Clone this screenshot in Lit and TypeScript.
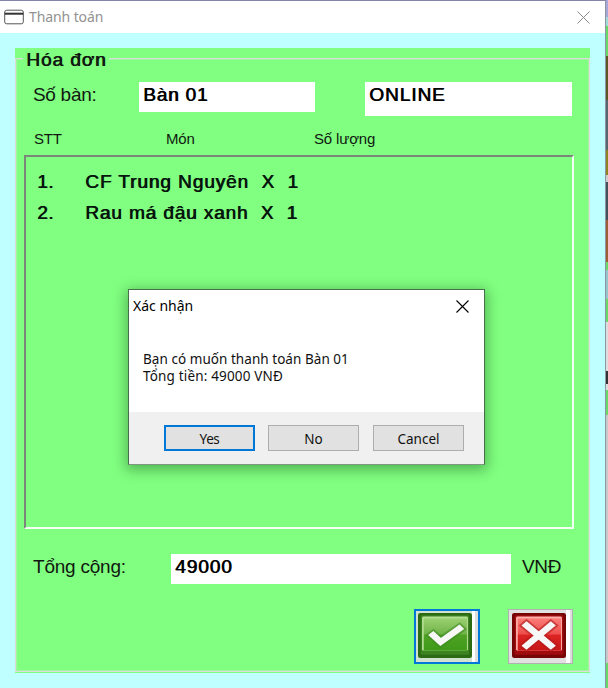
import { LitElement, html, css } from "lit";
import { customElement, property } from "lit/decorators.js";

const MARKS: Record<string, string> = {
  check: "M4.5 7.9 L6.7 10.3 L12.2 5.6",
  cross: "M4.3 4.4 L11.5 11.6 M11.5 4.4 L4.3 11.6",
};

@customElement("pixel-icon")
export class PixelIcon extends LitElement {
  @property() kind = "check";
  static styles = css`
    :host { display: block; width: 54px; height: 45px; }
    svg { display: block; width: 54px; height: 45px; }
  `;
  render() {
    const c = this.kind === "check"
      ? { dark: "#2c6a14", side: "#3d8420", hi: "#b5df95", a: "#9bd072", b: "#71b449", c: "#4fa224", d: "#3f9a18", dot: "#3f8a24" }
      : { dark: "#780506", side: "#a00c0e", hi: "#ffb0ac", a: "#fb7d79", b: "#ee4f4d", c: "#dc2424", d: "#c81616", dot: "#b01a1a" };
    const mark = MARKS[this.kind];
    return html`<svg viewBox="0 0 16 16" preserveAspectRatio="none">
      <defs><linearGradient id="g" x1="0" y1="0" x2="0" y2="1">
        <stop offset="0" stop-color=${c.a}></stop><stop offset=".48" stop-color=${c.b}></stop>
        <stop offset=".52" stop-color=${c.c}></stop><stop offset="1" stop-color=${c.d}></stop>
      </linearGradient></defs>
      <rect x="0" y="0" width="16" height="16" rx=".7" fill=${c.dark}></rect>
      <rect x=".8" y=".8" width="14.4" height="14" rx=".5" fill=${c.side}></rect>
      <rect x="1.2" y="1.2" width="13.6" height="12.2" rx=".5" fill=${c.hi}></rect>
      <rect x="1.7" y="1.9" width="12.8" height="11.5" fill="url(#g)"></rect>
      <path d=${mark} fill="none" stroke=${c.dot} stroke-width="3.3" stroke-linecap="square" stroke-dasharray=".9 .5" opacity=".6"></path>
      <path d=${mark} fill="none" stroke="#f7f7f7" stroke-width="2.1" stroke-linecap="square"></path>
    </svg>`;
  }
}

@customElement("app-root")
export class AppRoot extends LitElement {
  static styles = css`
    :host { display: block; width: 608px; height: 688px; overflow: hidden; position: relative; font-family: "Liberation Sans", Arial, sans-serif; color: #101810; }
    * { box-sizing: border-box; }
    .screen { display: flex; height: 688px; }
    .window { width: 606px; height: 688px; border-top: 1px solid #8483a8; border-right: 1px solid #8f94a4; background: #c0ffff; }
    .backdrop { width: 2px; background: linear-gradient(#a6a8dc 0 17px, #a0dcd8 17px 26px, #68d868 26px 56px, #5c5626 56px 100px, #56666c 100px 150px, #8d8420 150px 175px, #ccc 175px 182px, #435058 182px 220px, #9c5e36 220px 262px, #68d868 262px 270px, #94c5cc 270px 299px, #68d868 299px 322px, #ddd 322px 371px, #333 371px 384px, #ddd 384px 390px, #68d868 390px 415px, #c8c8c8 415px 663px, #68d868 663px); }
    .title { display: flex; align-items: center; height: 32px; padding: 0 15px 0 4px; background: #fff; color: #929292; font: 14px "Noto Sans", sans-serif; }
    .title svg { width: 20px; height: 16px; margin-right: 5px; }
    .title .close { width: 13px; height: 13px; margin: 0 0 0 auto; }
    .t0 { padding-bottom: 2px; letter-spacing: -.1px; }
    .body { padding: 15px; }
    .group { width: 575px; height: 625px; padding: 10px 0 1px; background: #80ff80; }
    .frame { display: flex; flex-direction: column; height: 614px; border: 1px solid #dcdcdc; box-shadow: inset 0 0 0 1px rgba(220, 232, 220, .35); }
    .legend, .field, .list { font-weight: normal; letter-spacing: .95px; text-shadow: .8px 0 0 currentColor; }
    .legend { align-self: flex-start; height: 22px; margin: -11px 0 0 7px; padding: 0 3px; background: #80ff80; font-size: 19px; line-height: 24px; }
    .row { display: flex; align-items: flex-start; font-size: 19px; }
    .field { height: 30px; padding: 0 4px; background: #fff; line-height: 25px; color: #000; }
    .f1 { letter-spacing: .8px; }
    .r1 { margin: 12px 0 0 17px; line-height: 25px; height: 34px; }
    .lab { width: 106px; letter-spacing: -.3px; }
    .f1 { width: 176px; margin-right: 50px; }
    .f2 { width: 207px; height: 34px; }
    .heads { display: flex; margin: 13px 0 0 18px; height: 27px; font-size: 15px; line-height: 20px; letter-spacing: -.15px; }
    .h1 { width: 132px; } .h2 { width: 148px; }
    .list { width: 550px; height: 374px; margin: -1px 0 0 8px; padding: 10px 0 0 11px; border: 2px solid; border-color: #7c877c #f2fff2 #f2fff2 #7c877c; font-size: 19px; color: #06140c; }
    .item { display: flex; height: 31px; line-height: 30px; white-space: pre; }
    .n { width: 48px; letter-spacing: .4px; }
    .i1 { letter-spacing: .92px; } .i2 { letter-spacing: .88px; }
    .total { margin: 25px 0 0 17px; line-height: 25px; height: 30px; }
    .tl { width: 138px; letter-spacing: -.22px; }
    .f3 { width: 340px; margin-right: 11px; }
    .unit { letter-spacing: -.3px; }
    .actions { display: flex; justify-content: space-between; width: 159px; margin: 25px 0 0 398px; }
    .act { width: 66px; height: 55px; padding: 2px 0 0 2px; border: 2px solid #0078d7; background: linear-gradient(90deg, #d2e2d0 56px, #fff 56px 59px, #ddd 59px); }
    .act.no { width: 65px; border: 1px solid #b0b0b0; padding: 3px 0 0 3px; background: linear-gradient(90deg, #e1e1e1 57px, #fff 57px 61px, #ddd 61px); }
    .dialog { position: absolute; left: 128px; top: 289px; width: 357px; height: 176px; border: 1px solid #44704a; border-bottom-color: #7d9a80; background: #fff; color: #000; box-shadow: 0 3px 12px 2px rgba(0, 40, 0, .35); font-family: "Noto Sans", sans-serif; }
    .dt { display: flex; align-items: center; height: 32px; padding: 0 15px 0 4px; font-size: 14px; }
    .dt span { padding-bottom: 2px; }
    .dt svg { width: 13px; height: 13px; margin-left: auto; }
    .msg { display: grid; grid-template-rows: 17px 17px; height: 90px; padding: 29px 0 0 14px; font-size: 13.5px; line-height: 17px; color: #111; }
    .m1 { letter-spacing: .05px; } .m2 { letter-spacing: .17px; }
    .foot { display: flex; justify-content: flex-end; gap: 14px; height: 52px; padding: 13px 20px 0 0; background: #f0f0f0; }
    .btn { width: 91px; height: 26px; border: 1px solid #adadad; background: #e1e1e1; font-size: 13.5px; line-height: 26px; text-align: center; color: #111; }
    .btn.def { margin-right: -1px; border: 2px solid #0078d7; line-height: 24px; letter-spacing: -.4px; }
  `;
  render() {
    return html`<div class="screen">
      <div class="window">
        <div class="title">
          <svg viewBox="0 0 20 16" fill="none" stroke="#555"><rect x=".7" y="1.2" width="18.6" height="13.6" rx="2"></rect><path d="M.7 4.7h18.6" stroke="#333" stroke-width="2"></path></svg>
          <span class="t0">Thanh toán</span>
          <svg class="close" viewBox="0 0 13 13" stroke="#888"><path d="M.5.5l12 12M12.5.5l-12 12"></path></svg>
        </div>
        <div class="body"><div class="group"><div class="frame">
          <div class="legend"><span>Hóa đơn</span></div>
          <div class="row r1"><div class="lab">Số bàn:</div><div class="field f1">Bàn 01</div><div class="field f2">ONLINE</div></div>
          <div class="heads"><div class="h1">STT</div><div class="h2">Món</div><div>Số lượng</div></div>
          <div class="list">
            <div class="item"><span class="n">1.</span><span class="i1">CF Trung Nguyên  X  1</span></div>
            <div class="item"><span class="n">2.</span><span class="i2">Rau má đậu xanh  X  1</span></div>
          </div>
          <div class="row total"><div class="tl">Tổng cộng:</div><div class="field f3">49000</div><div class="unit">VNĐ</div></div>
          <div class="actions"><div class="act"><pixel-icon kind="check"></pixel-icon></div><div class="act no"><pixel-icon kind="cross"></pixel-icon></div></div>
        </div></div></div>
      </div>
      <div class="backdrop"></div>
    </div>
    <div class="dialog">
      <div class="dt"><span>Xác nhận</span><svg viewBox="0 0 13 13" stroke="#000" stroke-width="1.1"><path d="M.5.5l12 12M12.5.5l-12 12"></path></svg></div>
      <div class="msg"><div class="m1">Bạn có muốn thanh toán Bàn 01</div><div class="m2">Tổng tiền: 49000 VNĐ</div></div>
      <div class="foot"><div class="btn def">Yes</div><div class="btn">No</div><div class="btn">Cancel</div></div>
    </div>`;
  }
}
